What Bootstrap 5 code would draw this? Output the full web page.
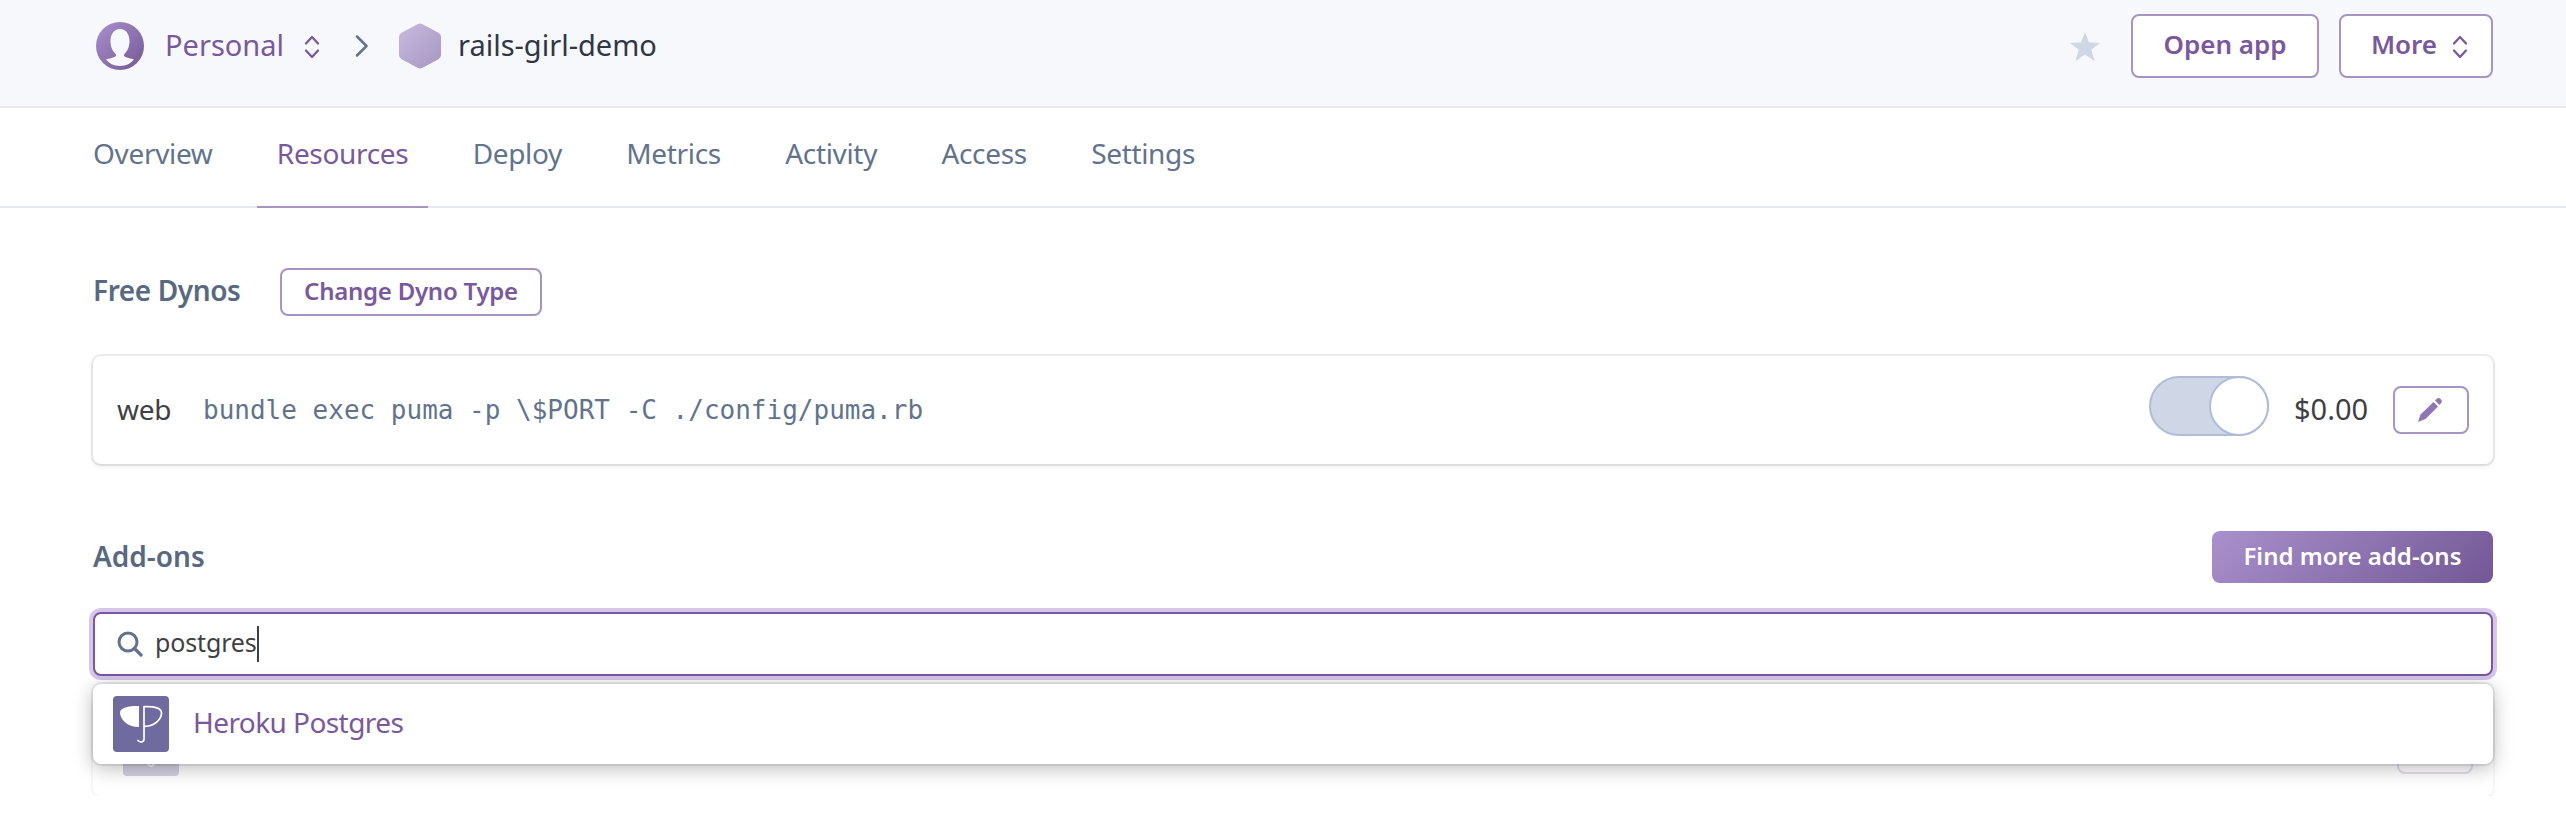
<!DOCTYPE html>
<html lang="en">
<head>
<meta charset="utf-8">
<title>rails-girl-demo · Resources</title>
<link href="https://cdn.jsdelivr.net/npm/bootstrap@5.3.0/dist/css/bootstrap.min.css" rel="stylesheet">
<style>
  :root { --hk-purple: #79589f; --hk-line: #a894c2; --hk-slate: #62738d; --hk-dark: #3f3f44; }
  body { font-family: "Noto Sans", sans-serif; font-size: 28px; line-height: 36px; color: var(--hk-dark); background: #fff; overflow: hidden; }
  svg { display: block; flex: none; }
  .gutters { padding-left: 93px; padding-right: 73px; }
  .topbar { height: 108px; background: #f7f8fc; border-bottom: 2px solid #e6e9f1; padding-top: 14px; }
  .crumb { font-size: 29px; }
  .crumb .lift { padding-bottom: 2px; }
  .lift { padding-bottom: 4px; }
  .purple { color: var(--hk-purple); }
  .app-name { color: #2f3747; }
  .hk-btn { --bs-btn-color: var(--hk-purple); --bs-btn-bg: #fff; --bs-btn-border-color: var(--hk-line); --bs-btn-border-width: 2px; --bs-btn-border-radius: 8px; --bs-btn-font-weight: 600; --bs-btn-padding-x: 0; --bs-btn-padding-y: 0; display: flex; align-items: center; justify-content: center; line-height: 36px; white-space: nowrap; }
  .btn-open { width: 188px; height: 64px; font-size: 26px; }
  .btn-more { width: 154px; height: 64px; font-size: 26px; }
  .btn-dyno { width: 262px; height: 48px; font-size: 24px; letter-spacing: -.25px; }
  .btn-edit { width: 76px; height: 48px; }
  .btn-find { width: 281px; height: 52px; font-size: 24px; color: #fff; border: 0; background: linear-gradient(135deg, #a991cd 0%, #735796 100%); }
  .tabs { height: 100px; border-bottom: 2px solid #e6e9f1; padding-left: 72px; gap: 24.3px; letter-spacing: -.33px; }
  .tabs .nav-link { padding: 27px 20px 0; height: 100px; line-height: 36px; color: var(--hk-slate); border-bottom: 2px solid transparent; white-space: nowrap; }
  .tabs .nav-link:first-child { padding-left: 21px; }
  .tabs .nav-link.active { color: var(--hk-purple); border-color: #a894c2; }
  main { padding-top: 60px; }
  .section-title { font-size: 28px; font-weight: 600; line-height: 36px; color: #596981; letter-spacing: -.4px; margin: 0; }
  .panel { height: 108px; border-radius: 8px; background: #fff; box-shadow: 0 0 0 2px rgba(47,55,71,.09), 0 2px 4px rgba(47,55,71,.12); padding: 0 24px 0 24px; }
  .cmd { font: 26px/36px "DejaVu Sans Mono", monospace; color: var(--hk-slate); }
  .toggle { width: 120px; height: 60px; border-radius: 30px; background: #cfd7e6; border: 2px solid #afbdd7; }
  .toggle-knob { width: 60px; height: 60px; margin: -2px; border-radius: 50%; background: #fff; border: 2px solid #afbdd7; }
  .search { height: 64px; border: 2px solid var(--hk-purple); border-radius: 8px; box-shadow: 0 0 0 4px #d5c6ea; background: #fff; padding-left: 22px; font-size: 25px; letter-spacing: -.15px; }
  .caret { width: 2px; height: 36px; background: #3f3f44; }
  .suggest { top: calc(100% + 8px); left: 0; right: 0; height: 80px; z-index: 2; border-radius: 8px; background: #fff; box-shadow: 0 0 0 2px rgba(0,0,0,.08), 0 4px 20px rgba(0,0,0,.28); padding-left: 20px; gap: 24px; letter-spacing: -.57px; }
  .pending { height: 96px; margin-top: 24px; opacity: .3; padding: 0 20px 0 30px; }
</style>
</head>
<body>
<svg width="0" height="0" class="position-absolute" aria-hidden="true">
  <defs>
    <linearGradient id="g1" x1="0" y1="0" x2="1" y2="1"><stop offset="0" stop-color="#a991cd"/><stop offset="1" stop-color="#735796"/></linearGradient>
    <linearGradient id="g2" x1="0" y1="0" x2="1" y2="1"><stop offset="0" stop-color="#c8bade"/><stop offset="1" stop-color="#a796c2"/></linearGradient>
    <symbol id="sort" viewBox="0 0 16 26"><path d="M2 10.500 8 4l6 6.500M2 17.500 8 24l6-6.500" fill="none" stroke="#79589f" stroke-width="2.300" stroke-linecap="round" stroke-linejoin="round"/></symbol>
    <symbol id="pg" viewBox="0 0 56 56">
      <rect width="56" height="56" rx="4" fill="#6f6b9f"/>
      <path d="M26 10C15 9.500 7 12 7 16.500 7 23 14 31 26 31Z" fill="#fff"/>
      <path d="M25 44.500C27 46.800 31 46.500 31 43V10.700C42 10 48.500 12.500 48.500 17 48.500 23 42 30 32 30.300" fill="none" stroke="#fff" stroke-width="1.700" stroke-linecap="round"/>
    </symbol>
  </defs>
</svg>

<header class="topbar gutters d-flex justify-content-between align-items-start">
  <div class="crumb d-flex align-items-center" style="height:64px">
    <svg width="48" height="48" viewBox="0 0 48 48" style="margin:0 23px 0 3px"><circle cx="24" cy="24" r="24" fill="url(#g1)"/><path d="M24 7C18 7 14.500 12 14.500 19C14.500 26 17.500 30 20 32.500C20.500 35.500 17 35.500 10 37.300C13 41.500 18 44 24 44S35 41.500 38 37.300C31 35.500 27.500 35.500 28 32.500C30.500 30 33.500 26 33.500 19C33.500 12 30 7 24 7Z" fill="#f7f8fc"/></svg>
    <span class="lift purple" style="width:119px;margin-left:-2px">Personal</span>
    <svg width="16" height="26" style="margin-left:20px"><use href="#sort"/></svg>
    <svg width="14" height="22" viewBox="0 0 14 22" style="margin:0 30px 0 35px"><path d="M2 1.500l9.500 9.500L2 20.500" fill="none" stroke="#62738d" stroke-width="2.500" stroke-linecap="round" stroke-linejoin="round"/></svg>
    <svg width="42" height="46" viewBox="0 0 42 46"><path d="M18.500 1.200Q21 0 23.500 1.200L39.500 9.800Q42 11.200 42 14V32Q42 34.800 39.500 36.200L23.500 44.800Q21 46 18.500 44.800L2.500 36.200Q0 34.800 0 32V14Q0 11.200 2.500 9.800Z" fill="url(#g2)"/></svg>
    <span class="lift app-name" style="margin-left:17px">rails-girl-demo</span>
  </div>
  <div class="d-flex align-items-center">
    <svg width="30" height="29" viewBox="0 0 30 29" style="margin-right:31px"><path d="M15 0l3.800 10.300L30 11l-8.800 6.800L24.500 29 15 22.400 5.500 29l3.300-11.200L0 11l11.200-.7z" fill="#cfd7e6"/></svg>
    <button class="btn hk-btn btn-open"><span class="lift">Open app</span></button>
    <button class="btn hk-btn btn-more" style="margin-left:20px"><span class="lift" style="margin-left:7px">More</span><svg width="16" height="26" style="margin-left:15px"><use href="#sort"/></svg></button>
  </div>
</header>

<nav class="nav tabs flex-nowrap">
  <a class="nav-link" href="#">Overview</a>
  <a class="nav-link active" href="#">Resources</a>
  <a class="nav-link" href="#">Deploy</a>
  <a class="nav-link" href="#">Metrics</a>
  <a class="nav-link" href="#">Activity</a>
  <a class="nav-link" href="#">Access</a>
  <a class="nav-link" href="#">Settings</a>
</nav>

<main class="gutters">
  <div class="d-flex align-items-center" style="height:48px">
    <h2 class="section-title lift" style="width:187px">Free Dynos</h2>
    <button class="btn hk-btn btn-dyno"><span style="padding-bottom:2px">Change Dyno Type</span></button>
  </div>

  <div class="panel d-flex align-items-center" style="margin-top:40px">
    <span style="width:86px;padding-bottom:3px;letter-spacing:-.3px">web</span>
    <span class="cmd">bundle exec puma -p \$PORT -C ./config/puma.rb</span>
    <div class="toggle d-flex justify-content-end ms-auto" style="margin-bottom:8px"><div class="toggle-knob"></div></div>
    <span style="width:99px;margin-left:25px;font-size:29px;padding-bottom:3px">$0.00</span>
    <button class="btn hk-btn btn-edit"><svg width="26" height="26" viewBox="0 0 26 26"><path d="M0 25l2.500-7.500L15.500 5l4.500 4.500L7.500 22Z M17 3.500l1.700-1.700q2-1.600 4 .3t.6 4L21.500 8Z" fill="#9076b5"/></svg></button>
  </div>

  <div class="d-flex align-items-center justify-content-between" style="height:52px;margin-top:67px">
    <h2 class="section-title" style="padding-bottom:3px;letter-spacing:0">Add-ons</h2>
    <button class="btn hk-btn btn-find"><span style="padding-bottom:3px">Find more add-ons</span></button>
  </div>

  <div class="position-relative" style="margin-top:29px">
    <div class="search d-flex align-items-center">
      <svg width="26" height="26" viewBox="0 0 26 26"><circle cx="11" cy="11" r="9" fill="none" stroke="#62738d" stroke-width="3"/><path d="M17.500 17.500L24 24" stroke="#62738d" stroke-width="3.200" stroke-linecap="round"/></svg>
      <span class="lift" style="margin-left:12px">postgres</span><span class="caret"></span>
    </div>
    <div class="suggest position-absolute d-flex align-items-center">
      <svg width="56" height="56"><use href="#pg"/></svg>
      <span class="lift purple">Heroku Postgres</span>
    </div>
  </div>

  <div class="panel pending d-flex align-items-center justify-content-between">
    <svg width="56" height="56"><use href="#pg"/></svg>
    <span class="btn hk-btn btn-edit" style="margin-top:4px"></span>
  </div>
</main>
<script src="https://cdn.jsdelivr.net/npm/bootstrap@5.3.0/dist/js/bootstrap.bundle.min.js"></script>
</body>
</html>
